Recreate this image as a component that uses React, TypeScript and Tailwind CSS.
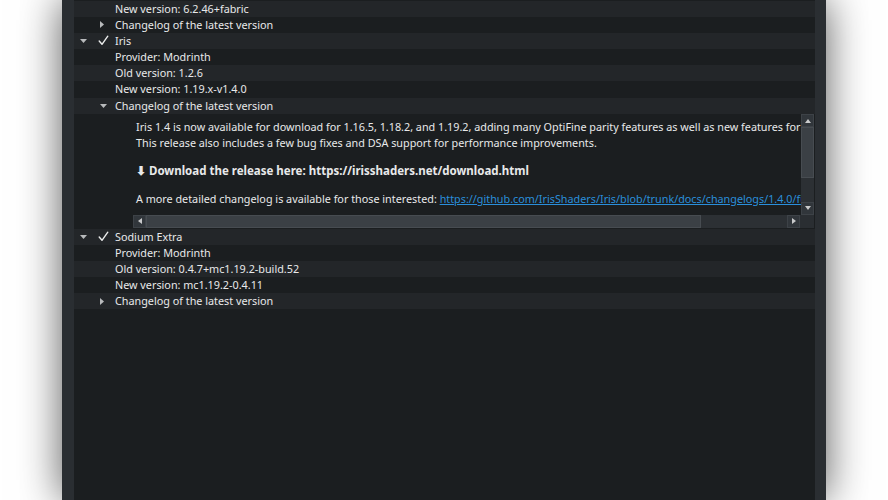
import React from "react";

const L = "bg-[#232629]";
const D = "bg-[#1b1e20]";

function Right() {
  return (
    <svg width="4" height="7" viewBox="0 0 4 7" className="block">
      <path d="M0 0 L4 3.5 L0 7 Z" fill="#b8babc" />
    </svg>
  );
}
function Down() {
  return (
    <svg width="7" height="4" viewBox="0 0 7 4" className="block">
      <path d="M0 0 H7 L3.5 4 Z" fill="#b8babc" />
    </svg>
  );
}
function Check() {
  return (
    <svg width="11" height="11" viewBox="0 0 11 11" className="block">
      <path d="M1.2 6 L4 9.3 L9.8 1.2" fill="none" stroke="#eceded" strokeWidth="1.4" strokeLinecap="round" strokeLinejoin="round" />
    </svg>
  );
}

function Row({ bg, children }: { bg: string; children: React.ReactNode }) {
  return <div className={`h-[16.2px] flex items-center whitespace-nowrap ${bg}`}>{children}</div>;
}

function Parent({ bg, label }: { bg: string; label: string }) {
  return (
    <Row bg={bg}>
      <div className="w-[18px] flex justify-center pl-[1px]">
        <Down />
      </div>
      <div className="w-[23px] flex pl-[6px]">
        <Check />
      </div>
      <span>{label}</span>
    </Row>
  );
}

function Child({ bg, label }: { bg: string; label: string }) {
  return (
    <Row bg={bg}>
      <div className="w-[41px]" />
      <span>{label}</span>
    </Row>
  );
}

function ChangeRow({ bg, open }: { bg: string; open: boolean }) {
  return (
    <Row bg={bg}>
      <div className="w-[18px]" />
      <div className="w-[23px] flex pl-[8px]">{open ? <Down /> : <Right />}</div>
      <span>Changelog of the latest version</span>
    </Row>
  );
}

function ArrowBtn({ dir }: { dir: "up" | "down" | "left" | "right" }) {
  const paths: Record<string, string> = {
    up: "M1 5 L4 1 L7 5 Z",
    down: "M1 1 L7 1 L4 5 Z",
    left: "M5 1 L5 7 L1 4 Z",
    right: "M1 1 L5 4 L1 7 Z",
  };
  const vert = dir === "up" || dir === "down";
  return (
    <div className="w-[13px] h-[13px] flex items-center justify-center bg-[#31363b] border border-[#3d4247] shrink-0">
      <svg width={vert ? 8 : 6} height={vert ? 6 : 8} viewBox={vert ? "0 0 8 6" : "0 0 6 8"} className="block">
        <path d={paths[dir]} fill="#c9cacb" />
      </svg>
    </div>
  );
}

function Changelog() {
  return (
    <div className={`h-[114.7px] flex ${D}`}>
      <div className="w-[59px] shrink-0" />
      <div className="flex-1 flex flex-col py-[0.5px] pr-[1px] min-w-0">
        <div className="flex-1 flex min-h-0">
          <div className="flex-1 min-w-0 overflow-hidden whitespace-nowrap bg-[#1b1e20] pl-[3px] pt-[4.5px] leading-[16px]">
            <p>
              Iris 1.4 is now available for download for 1.16.5, 1.18.2, and 1.19.2, adding many OptiFine parity features as well as new features for developers.
            </p>
            <p>This release also includes a few bug fixes and DSA support for performance improvements.</p>
            <p className="mt-[12px] font-bold text-[11.5px]">⬇ Download the release here: https://irisshaders.net/download.html</p>
            <p className="mt-[12px]">
              A more detailed changelog is available for those interested:{" "}
              <span className="text-[#2a8fdb] underline">https://github.com/IrisShaders/Iris/blob/trunk/docs/changelogs/1.4.0/full.md</span>
            </p>
          </div>
          <div className="w-[13px] flex flex-col bg-[#2a2e32]">
            <ArrowBtn dir="up" />
            <div className="h-[51px] bg-[#3b4045] border border-[#474c51]" />
            <div className="flex-1 bg-[#2c3034]" />
            <ArrowBtn dir="down" />
          </div>
        </div>
        <div className="h-[13.5px] flex">
          <div className="flex-1 flex bg-[#2c3034]">
            <ArrowBtn dir="left" />
            <div className="w-[555px] bg-[#3b4045] border border-[#474c51]" />
            <div className="flex-1 bg-[#2c3034]" />
            <ArrowBtn dir="right" />
          </div>
          <div className="w-[14px] bg-[#2a2e32]" />
        </div>
      </div>
    </div>
  );
}

export default function App() {
  return (
    <div className="w-[888px] h-[500px] bg-white overflow-hidden">
      <div className="ml-[62px] w-[764px] h-[500px] bg-[#2a2e32] pl-[12px] pr-[11px] shadow-[0_0_40px_rgba(0,0,0,0.65)] font-['Noto_Sans',sans-serif] text-[10.8px] text-[#e8e9ea]">
        <div className="h-full bg-[#1b1e20] overflow-hidden pt-[0.5px]">
          <Child bg={L} label="New version: 6.2.46+fabric" />
          <ChangeRow bg={D} open={false} />
          <Parent bg={L} label="Iris" />
          <Child bg={D} label="Provider: Modrinth" />
          <Child bg={L} label="Old version: 1.2.6" />
          <Child bg={D} label="New version: 1.19.x-v1.4.0" />
          <ChangeRow bg={L} open={true} />
          <Changelog />
          <Parent bg={L} label="Sodium Extra" />
          <Child bg={D} label="Provider: Modrinth" />
          <Child bg={L} label="Old version: 0.4.7+mc1.19.2-build.52" />
          <Child bg={D} label="New version: mc1.19.2-0.4.11" />
          <ChangeRow bg={L} open={false} />
        </div>
      </div>
    </div>
  );
}
